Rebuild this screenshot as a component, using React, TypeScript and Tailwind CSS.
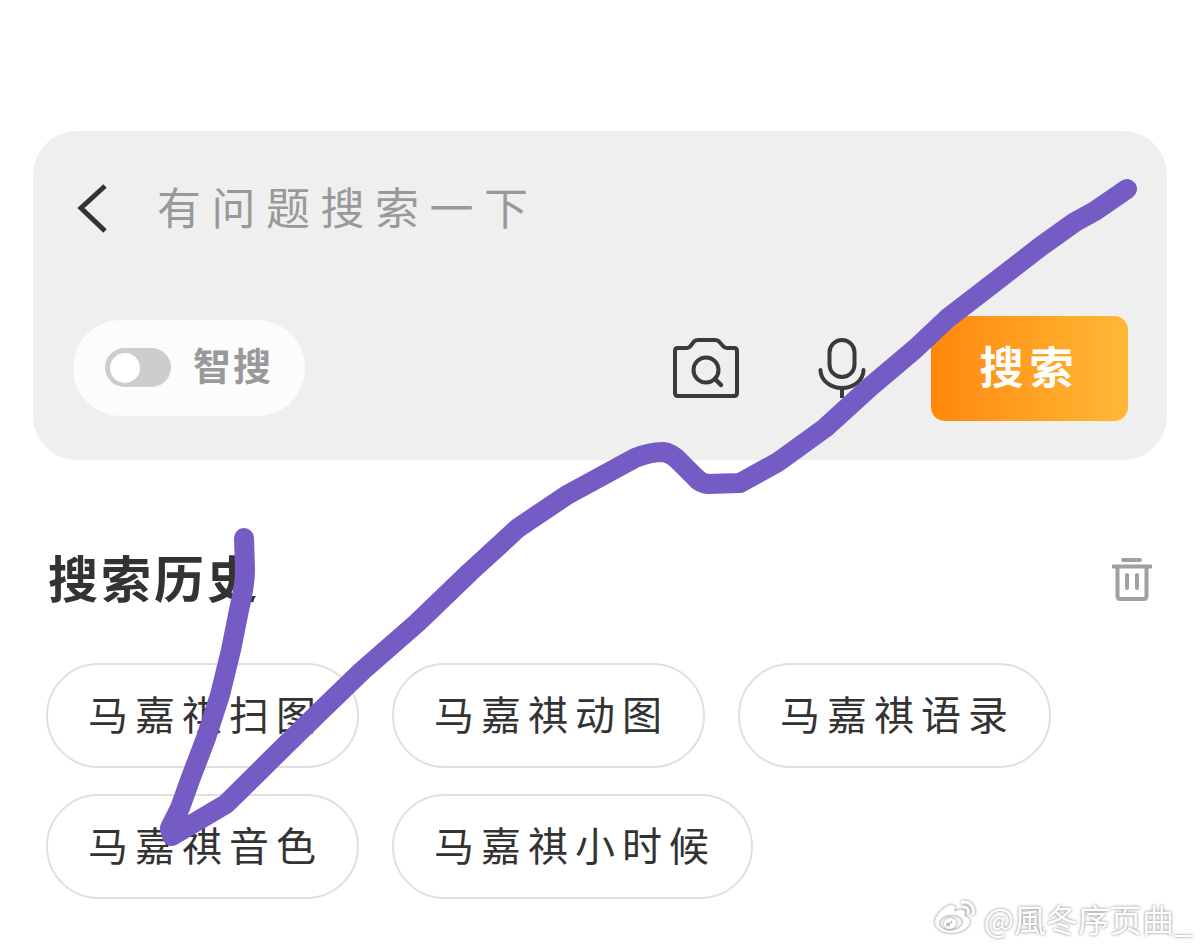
import { FaWeibo } from 'react-icons/fa'

const HISTORY = [
  { label: '马嘉祺扫图', width: 'w-[313px]' },
  { label: '马嘉祺动图', width: 'w-[313px]' },
  { label: '马嘉祺语录', width: 'w-[313px]' },
  { label: '马嘉祺音色', width: 'w-[313px]' },
  { label: '马嘉祺小时候', width: 'w-[361px]' },
]

const SCRIBBLE =
  'M1127 189 L1095 211 L1075 222 L1040 247 L1000 278 L948 318 L915 349 L870 387 L825 428 L778 462 L740 483 L708 484 Q700 483 695 477 L680 462 Q672 453 663 452 Q650 452 635 458 L567 495 L518 528 L470 572 L417 623 L362 671 L300 731 L226 804 L172 836 L170 828 L180 808 L190 780 L206 738 L220 695 L231 650 L239 610 Q245 585 245 570 L244 538'

export default function App() {
  return (
    <div className="relative h-[952px] overflow-hidden bg-white font-['Noto_Sans_CJK_SC','Noto_Sans',sans-serif] text-[#333]">
      <div className="pt-[131px] px-[33px]">
        <div className="h-[329px] rounded-[44px] bg-[#efefef] pt-[53px] pl-[40px] pr-[39px] pb-[39px] flex flex-col justify-between">
          <div className="flex items-center h-[50px]">
            <svg width="34" height="50" viewBox="0 0 34 50" fill="none" stroke="#333" strokeWidth="5" className="ml-[2px] shrink-0">
              <path d="M30 2 L6 24 L30 47" />
            </svg>
            <span className="ml-[48px] pb-[6px] text-[44px] leading-none tracking-[10.5px] text-[#999]">有问题搜索一下</span>
          </div>

          <div className="flex items-center h-[105px]">
            <div className="flex items-center w-[232px] h-[96px] mb-[2px] rounded-full bg-[#fcfcfc] pl-[32px]">
              <div className="flex items-center w-[66px] h-[39px] rounded-full bg-[#cdcdcd] pl-[5px]">
                <div className="w-[30px] h-[30px] rounded-full bg-white" />
              </div>
              <span className="ml-[22px] pb-[8px] text-[38px] leading-none font-bold tracking-[2px] text-[#999]">智搜</span>
            </div>

            <svg width="66" height="60" viewBox="0 0 66 60" fill="none" stroke="#3a3a3a" strokeWidth="4" className="ml-auto mb-[2px] shrink-0">
              <path d="M5 10 H14 Q16 10 17.5 8 L21 3.5 Q22.5 2 25 2 H42 Q44.5 2 46 3.5 L50 8 Q51.5 10 54 10 H61 Q64 10 64 13 V55 Q64 58 61 58 H5 Q2 58 2 55 V13 Q2 10 5 10 Z" />
              <circle cx="33" cy="32" r="12.5" />
              <path d="M42 41 L48 47" strokeLinecap="round" strokeWidth="4.5" />
            </svg>
            <svg width="50" height="60" viewBox="0 0 50 60" fill="none" stroke="#3a3a3a" strokeWidth="4" className="ml-[78px] mb-[2px] shrink-0">
              <rect x="12.5" y="2" width="25" height="37" rx="12.5" />
              <path d="M3.5 32 A21.5 18 0 0 0 46.5 32" strokeLinecap="round" />
              <path d="M25 50 V60" />
            </svg>

            <button className="ml-[64px] pb-[8px] w-[197px] h-[105px] rounded-[14px] bg-gradient-to-r from-[#ff8708] to-[#ffb934] text-white text-[44px] leading-none font-bold tracking-[6px]">
              搜索
            </button>
          </div>
        </div>
      </div>

      <div className="mt-[95px] pl-[46px] pr-[48px]">
        <div className="flex items-center justify-between h-[50px]">
          <h2 className="pl-[2px] pb-[8px] text-[50px] leading-none font-bold tracking-[3px] text-[#333]">搜索历史</h2>
          <svg width="40" height="44" viewBox="0 0 40 44" fill="none" stroke="#a0a0a0" strokeWidth="4" strokeLinecap="round" strokeLinejoin="round" className="mb-[2px]">
            <path d="M11 3 H28" />
            <path d="M1.5 9.5 H38.5" />
            <path d="M5.5 10 V39 Q5.5 42 8.5 42 H31.5 Q34.5 42 34.5 39 V10" />
            <path d="M15 18 V31" />
            <path d="M25 18 V31" />
          </svg>
        </div>

        <div className="mt-[58px] flex flex-wrap gap-x-[33px] gap-y-[26px] w-[1006px]">
          {HISTORY.map(item => (
            <div
              key={item.label}
              className={`${item.width} h-[105px] flex items-center pl-[40px] pb-[6px] rounded-full border-2 border-[#e0e0e0] text-[40px] leading-none tracking-[7px] text-[#333]`}
            >
              {item.label}
            </div>
          ))}
        </div>
      </div>

      {/* 手绘的紫色线条，盖在页面上 */}
      <svg className="absolute inset-0 pointer-events-none" width="1200" height="952" viewBox="0 0 1200 952" fill="none">
        <path d={SCRIBBLE} stroke="#755cc4" strokeWidth="20" strokeLinecap="round" strokeLinejoin="round" />
      </svg>

      {/* 微博水印 */}
      <div className="absolute right-[8px] bottom-[14px] flex items-center gap-[6px] text-white">
        <FaWeibo className="w-[46px] h-[40px] [filter:drop-shadow(0_0_1.5px_#777)]" />
        <span className="text-[32px] leading-none [text-shadow:0_0_3px_#777]">@風冬序页曲_</span>
      </div>
    </div>
  )
}
